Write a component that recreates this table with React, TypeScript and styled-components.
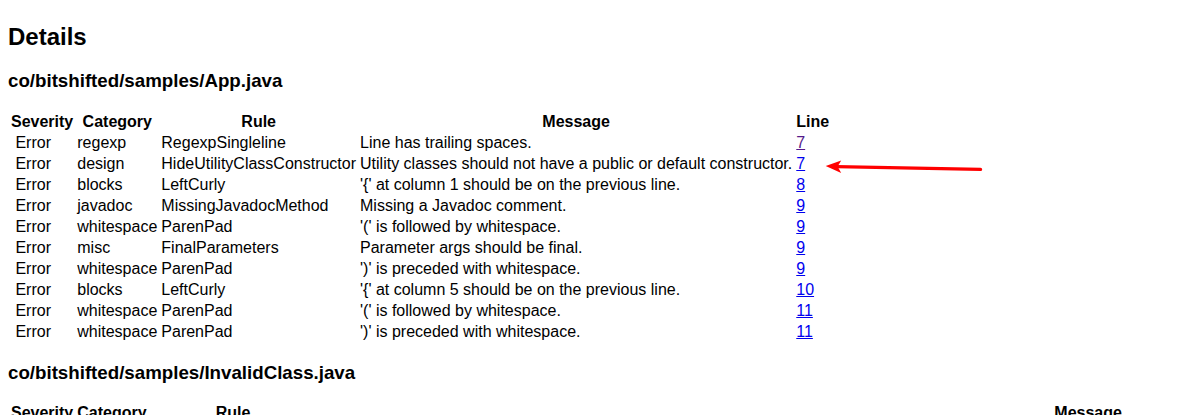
import React from "react";
import styled, { createGlobalStyle } from "styled-components";

const GlobalStyle = createGlobalStyle`
  html { overflow: hidden; background: #fff; }
  body {
    margin: 0;
    padding: 8px;
    font-family: "Liberation Sans", Arial, sans-serif;
    color: #000;
    background: #fff;
  }
`;

const Title = styled.h2`
  font-size: 24px;
  line-height: 27px;
  font-weight: bold;
  margin: 15.2px 0 19.92px;
`;

const FileHeading = styled.h3`
  font-size: 18.72px;
  line-height: 21px;
  font-weight: bold;
  margin: 18.72px 0;
`;

const Log = styled.table<{ $wide?: boolean }>`
  border-collapse: separate;
  border-spacing: 2px;
  font-size: 16px;
  line-height: 17px;
  ${(p) => (p.$wide ? "width: max-content;" : "")}
`;

const HeadCell = styled.th<{ $width?: number }>`
  padding: 1px;
  font-weight: bold;
  text-align: center;
  white-space: nowrap;
  ${(p) => (p.$width ? `width: ${p.$width}px; min-width: ${p.$width}px;` : "")}
`;

const Cell = styled.td`
  padding: 1px;
  text-align: left;
  white-space: nowrap;
`;

const LineCell = styled(Cell)`
  position: relative;
`;

const LineLink = styled.a<{ $visited?: boolean }>`
  color: ${(p) => (p.$visited ? "#551a8b" : "#0000ee")};
  text-decoration: underline;
`;

const Pointer = styled.svg`
  position: absolute;
  left: 24px;
  top: 1.7px;
  overflow: visible;
  pointer-events: none;
`;

type Issue = { category: string; rule: string; message: string; line: number; visited?: boolean; marked?: boolean };

const appIssues: Issue[] = [
  { category: "regexp", rule: "RegexpSingleline", message: "Line has trailing spaces.", line: 7, visited: true },
  { category: "design", rule: "HideUtilityClassConstructor", message: "Utility classes should not have a public or default constructor.", line: 7, marked: true },
  { category: "blocks", rule: "LeftCurly", message: "'{' at column 1 should be on the previous line.", line: 8 },
  { category: "javadoc", rule: "MissingJavadocMethod", message: "Missing a Javadoc comment.", line: 9 },
  { category: "whitespace", rule: "ParenPad", message: "'(' is followed by whitespace.", line: 9 },
  { category: "misc", rule: "FinalParameters", message: "Parameter args should be final.", line: 9 },
  { category: "whitespace", rule: "ParenPad", message: "')' is preceded with whitespace.", line: 9 },
  { category: "blocks", rule: "LeftCurly", message: "'{' at column 5 should be on the previous line.", line: 10 },
  { category: "whitespace", rule: "ParenPad", message: "'(' is followed by whitespace.", line: 11 },
  { category: "whitespace", rule: "ParenPad", message: "')' is preceded with whitespace.", line: 11 },
];

const Arrow = () => (
  <Pointer width="170" height="25" viewBox="0 0 170 25">
    <path d="M17.5 10.6 L161.5 13.4" stroke="#ff0000" strokeWidth="3.4" strokeLinecap="round" fill="none" />
    <path d="M6.7 10 L22.2 4.6 L18.6 10.6 L22.2 16.9 Z" fill="#ff0000" />
  </Pointer>
);

export default function App() {
  return (
    <>
      <GlobalStyle />
      <Title>Details</Title>
      <FileHeading>co/bitshifted/samples/App.java</FileHeading>
      <Log>
        <thead>
          <tr>
            <HeadCell>Severity</HeadCell>
            <HeadCell>Category</HeadCell>
            <HeadCell>Rule</HeadCell>
            <HeadCell>Message</HeadCell>
            <HeadCell>Line</HeadCell>
          </tr>
        </thead>
        <tbody>
          {appIssues.map((it, i) => (
            <tr key={i}>
              <Cell>{"\u00a0Error"}</Cell>
              <Cell>{it.category}</Cell>
              <Cell>{it.rule}</Cell>
              <Cell>{it.message}</Cell>
              <LineCell>
                <LineLink href={`#L${it.line}`} $visited={it.visited}>
                  {it.line}
                </LineLink>
                {it.marked && <Arrow />}
              </LineCell>
            </tr>
          ))}
        </tbody>
      </Log>
      <FileHeading>co/bitshifted/samples/InvalidClass.java</FileHeading>
      <Log $wide>
        <thead>
          <tr>
            <HeadCell>Severity</HeadCell>
            <HeadCell>Category</HeadCell>
            <HeadCell $width={165}>Rule</HeadCell>
            <HeadCell $width={1537}>Message</HeadCell>
            <HeadCell>Line</HeadCell>
          </tr>
        </thead>
      </Log>
    </>
  );
}
